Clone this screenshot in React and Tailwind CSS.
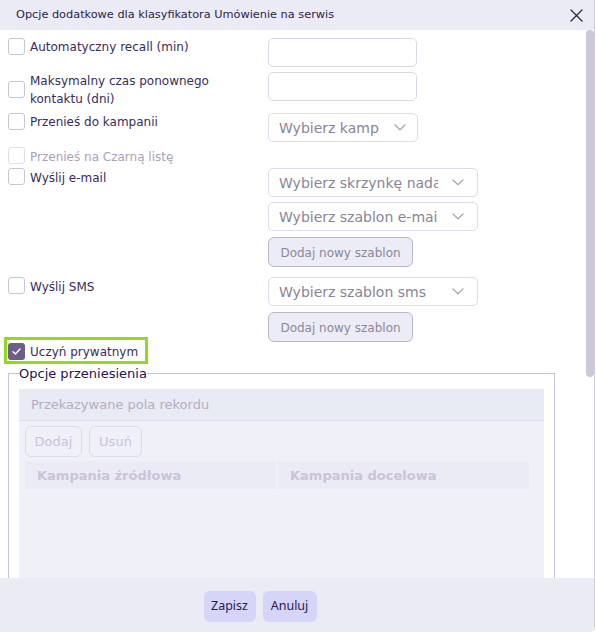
import React from "react";

const F = { fontFamily: '"DejaVu Sans", sans-serif' };

function Box({ checked, disabled }) {
  if (checked) {
    return (
      <span className="flex h-[17px] w-[17px] shrink-0 items-center justify-center rounded-[3px] bg-[#6f5b8c]">
        <svg width="11" height="11" viewBox="0 0 12 12" fill="none">
          <path d="M2.2 6.3 L4.8 8.8 L9.8 3.4" stroke="#fff" strokeWidth="1.6" strokeLinecap="round" strokeLinejoin="round" />
        </svg>
      </span>
    );
  }
  return (
    <span
      className={
        "block h-[17px] w-[17px] shrink-0 rounded-[3px] border bg-white " +
        (disabled ? "border-[#e0e0ea]" : "border-[#c6c6d6]")
      }
    />
  );
}

function Chevron() {
  return (
    <svg width="12" height="7" viewBox="0 0 12 7" fill="none" className="ml-auto shrink-0">
      <path d="M1 1 L6 5.8 L11 1" stroke="#a8a4b4" strokeWidth="1.2" strokeLinecap="round" strokeLinejoin="round" />
    </svg>
  );
}

function Select({ text, wide }) {
  return (
    <div
      className={
        "flex h-[29px] items-center rounded-[5px] border border-[#dcdcec] bg-white pl-[10px] " +
        (wide ? "w-[210px] pr-[13px]" : "w-[150px] pr-[11px]")
      }
    >
      <span
        className={
          "overflow-hidden whitespace-nowrap pt-px text-[14px] leading-[27px] text-[#8a8498] " +
          (wide ? "w-[159px]" : "w-[100px]")
        }
      >
        {text}
      </span>
      <Chevron />
    </div>
  );
}

function Input() {
  return <div className="h-[29px] w-[149px] rounded-[5px] border border-[#d8d8e8] bg-white" />;
}

function NewTemplate() {
  return (
    <div className="flex h-[30px] w-[145px] items-center justify-center rounded-[6px] border border-[#b8b8c8] bg-[#ececf6] pt-px text-[12px] text-[#8c8898]">
      Dodaj nowy szablon
    </div>
  );
}

export default function App() {
  return (
    <div className="relative h-[632px] w-[596px] overflow-hidden bg-white" style={F}>
      <div className="flex h-full w-[595px] flex-col overflow-hidden rounded-br-[5px] border-r border-[#cfcfe4]">
        {/* title */}
        <div className="flex h-[30px] shrink-0 items-center justify-between bg-[#ebebf5] pl-[16px] pr-[11px]">
          <span className="text-[11.3px] text-[#2b1d4c]">
            Opcje dodatkowe dla klasyfikatora Umówienie na serwis
          </span>
          <svg width="13" height="13" viewBox="0 0 13 13" fill="none">
            <path d="M1 1 L12 12 M12 1 L1 12" stroke="#2b2b3b" strokeWidth="1.3" strokeLinecap="round" />
          </svg>
        </div>

        {/* body */}
        <div className="relative min-h-0 flex-1 overflow-hidden">
          <div className="flex flex-col pb-[8px] pl-[8px] pt-[8px] text-[12px] text-[#3a2b5a]">
            {/* row 1 */}
            <div className="flex">
              <div className="flex w-[260px] items-start gap-[5px]">
                <Box />
                <span className="pt-px leading-[17px]">Automatyczny recall (min)</span>
              </div>
              <Input />
            </div>
            {/* row 2 */}
            <div className="mt-[5px] flex">
              <div className="-mt-px flex w-[260px] items-center gap-[5px]">
                <Box />
                <span className="pt-px leading-[18px]">
                  Maksymalny czas ponownego
                  <br />
                  kontaktu (dni)
                </span>
              </div>
              <Input />
            </div>
            {/* row 3 */}
            <div className="mt-[5px] flex">
              <div className="flex w-[260px] items-start gap-[5px]">
                <Box />
                <span className="pt-px leading-[17px]">Przenieś do kampanii</span>
              </div>
              <Select text="Wybierz kampanię" />
            </div>
            {/* row 4 */}
            <div className="mt-[5px] flex h-[17px]">
              <div className="flex w-[260px] items-start gap-[5px]">
                <Box disabled />
                <span className="pt-[2px] leading-[17px] text-[#a9a2b8]">Przenieś na Czarną listę</span>
              </div>
            </div>
            {/* row 5 */}
            <div className="mt-[4px] flex">
              <div className="flex w-[260px] items-start gap-[5px]">
                <Box />
                <span className="pt-[2px] leading-[17px]">Wyślij e-mail</span>
              </div>
              <div className="flex flex-col">
                <Select wide text="Wybierz skrzynkę nadawczą" />
                <div className="mt-[5px]">
                  <Select wide text="Wybierz szablon e-mail" />
                </div>
                <div className="mt-[6px]">
                  <NewTemplate />
                </div>
              </div>
            </div>
            {/* row 6 */}
            <div className="mt-[10px] flex">
              <div className="flex w-[260px] items-start gap-[5px]">
                <Box />
                <span className="pt-[2px] leading-[17px]">Wyślij SMS</span>
              </div>
              <div className="flex flex-col">
                <Select wide text="Wybierz szablon sms" />
                <div className="mt-[6px]">
                  <NewTemplate />
                </div>
              </div>
            </div>
            {/* row 7 */}
            <div className="ml-[-1px] mt-[-2px] flex">
              <div className="flex h-[21px] w-[138px] items-start gap-[5px] pl-px pt-[3px] outline-[3px] outline-solid outline-[#8fdc1e]">
                <Box checked />
                <span className="pt-px leading-[17px]">Uczyń prywatnym</span>
              </div>
            </div>
            {/* fieldset */}
            <fieldset className="mt-[4px] w-[547px] border border-[#c4c4dc] px-[10px] pb-[10px] pt-[7px]">
              <legend className="text-[13px] leading-[17px] text-[#2a1050]">Opcje przeniesienia</legend>
              <div className="h-[490px] bg-[#f0f0f9]">
                <div className="flex h-[32px] items-center border-b border-[#dcdeed] bg-[#e8eaf4] pl-[12px] pt-px text-[13px] text-[#b5adc6]">
                  Przekazywane pola rekordu
                </div>
                <div className="mt-[5px] flex gap-[7px] px-[6px]">
                  <div className="flex h-[31px] w-[57px] items-center justify-center rounded-[6px] border border-[#dcdcec] text-[13px] text-[#cac3d9]">
                    Dodaj
                  </div>
                  <div className="flex h-[31px] w-[53px] items-center justify-center rounded-[6px] border border-[#dcdcec] text-[13px] text-[#cac3d9]">
                    Usuń
                  </div>
                </div>
                <div className="ml-[6px] mt-[4px] grid w-[504px] grid-cols-2 gap-[2px]">
                  <div className="flex h-[28px] items-center bg-[#ebebf6] pl-[12px] pt-px text-[13px] font-semibold text-[#cac3d9]">
                    Kampania źródłowa
                  </div>
                  <div className="flex h-[28px] items-center bg-[#ebebf6] pl-[12px] pt-px text-[13px] font-semibold text-[#cac3d9]">
                    Kampania docelowa
                  </div>
                </div>
              </div>
            </fieldset>
          </div>
          {/* scrollbar thumb overlay */}
          <div className="absolute right-0 top-0 h-[347px] w-[8px] rounded-[4px] bg-[#c9c9d9]" />
        </div>

        {/* footer */}
        <div
          className="flex h-[54px] shrink-0 items-start justify-center gap-[7px] bg-[#ebebf5] pr-[74px] pt-[13px] text-[12.5px] text-[#2a1a4a]"
          style={{ fontFamily: '"Noto Sans", sans-serif' }}
        >
          <div className="flex h-[31px] w-[52px] items-center justify-center rounded-[6px] bg-[#d5d5fa]">Zapisz</div>
          <div className="flex h-[31px] w-[54px] items-center justify-center rounded-[6px] bg-[#d5d5fa]">Anuluj</div>
        </div>
      </div>
    </div>
  );
}
